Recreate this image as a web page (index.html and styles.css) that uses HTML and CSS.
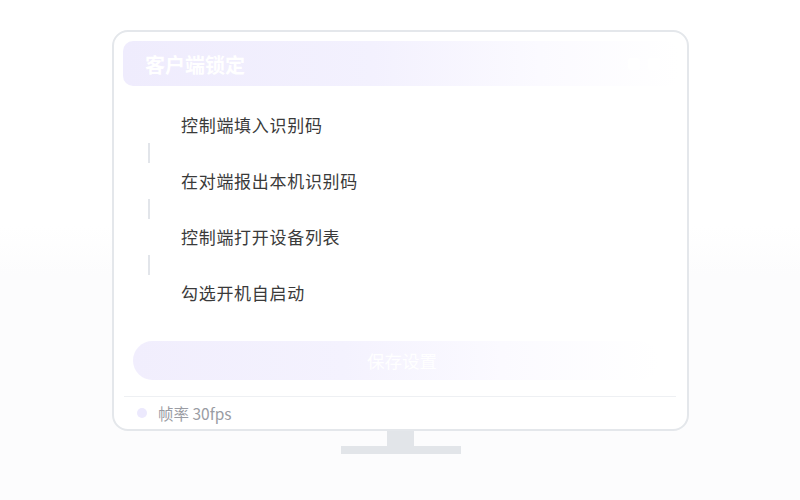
FILE: index.html
```html
<!DOCTYPE html>
<html lang="zh">
<head>
<meta charset="utf-8">
<link rel="stylesheet" href="styles.css">
</head>
<body>
<div class="stage">
  <div class="monitor">
    <div class="screen">
      <div class="header">
        <span class="title">客户端锁定</span>
        <span class="tools"><i></i><i></i></span>
      </div>
      <div class="steps">
        <div class="step"><span class="text">控制端填入识别码</span></div>
        <div class="link"></div>
        <div class="step"><span class="text">在对端报出本机识别码</span></div>
        <div class="link"></div>
        <div class="step"><span class="text">控制端打开设备列表</span></div>
        <div class="link"></div>
        <div class="step"><span class="text">勾选开机自启动</span></div>
      </div>
      <div class="btn">保存设置</div>
      <div class="divider"></div>
      <div class="footer">
        <span class="dot"></span>
        <span class="fps">帧率 30fps</span>
      </div>
    </div>
    <div class="neck"></div>
    <div class="base"></div>
  </div>
</div>
</body>
</html>
```
FILE: styles.css
```css
* { box-sizing: border-box; }
html, body {
  margin: 0;
  padding: 0;
  background: #ffffff;
  font-family: "Noto Sans CJK SC", "Noto Sans", sans-serif;
}
.stage {
  width: 800px;
  height: 500px;
  padding-top: 30px;
  display: flex;
  justify-content: center;
  background: linear-gradient(180deg, #ffffff 0%, #ffffff 45%, #fcfcfd 55%, #fcfcfd 100%);
}
.monitor {
  width: 577px;
  display: flex;
  flex-direction: column;
  align-items: center;
  margin-left: 1px;
}
.screen {
  width: 577px;
  height: 401px;
  background: #ffffff;
  border: 2px solid #e4e7eb;
  border-radius: 16px;
  padding: 9px 9px 0 9px;
  display: flex;
  flex-direction: column;
}
.header {
  height: 45px;
  border-radius: 10px;
  background: linear-gradient(90deg, #efecfd 0%, #f3f1fe 45%, #fbfaff 75%, #ffffff 100%);
  display: flex;
  align-items: center;
  justify-content: space-between;
  padding: 0 18px 0 22px;
}
.title {
  color: #ffffff;
  font-size: 20px;
  font-weight: 700;
  line-height: 26px;
  margin-top: 2px;
}
.tools { display: flex; gap: 8px; align-items: center; }
.tools i {
  display: block;
  width: 12px;
  height: 12px;
  border-radius: 3px;
  background: #ffffff;
}
.steps {
  padding: 21px 0 0 24px;
  display: flex;
  flex-direction: column;
}
.step {
  height: 36px;
  display: flex;
  align-items: center;
  padding-left: 34px;
}
.text {
  font-size: 17px;
  letter-spacing: 0.7px;
  color: #3a3a3a;
  line-height: 36px;
}
.link {
  width: 2px;
  height: 20px;
  background: #e2e5ea;
  margin-left: 1px;
}
.btn {
  margin: 30px 19px 0 10px;
  height: 39px;
  border-radius: 20px;
  background: linear-gradient(90deg, #f1eefd 0%, #f4f2fe 40%, #fbfaff 70%, #ffffff 100%);
  color: #ffffff;
  font-size: 17.5px;
  line-height: 39px;
  text-align: center;
  padding-left: 12px;
}
.divider {
  margin: 16px 2px 0 1px;
  height: 1px;
  background: #eef0f3;
}
.footer {
  height: 32px;
  display: flex;
  align-items: center;
  padding-left: 14px;
  gap: 11px;
}
.dot {
  width: 10px;
  height: 10px;
  border-radius: 50%;
  background: #ece9fd;
}
.fps {
  font-size: 15.5px;
  color: #9a9ca3;
  line-height: 20px;
}
.neck {
  width: 27px;
  height: 15px;
  background: #e2e5e9;
}
.base {
  width: 120px;
  height: 8px;
  background: #e2e5e9;
}
```
